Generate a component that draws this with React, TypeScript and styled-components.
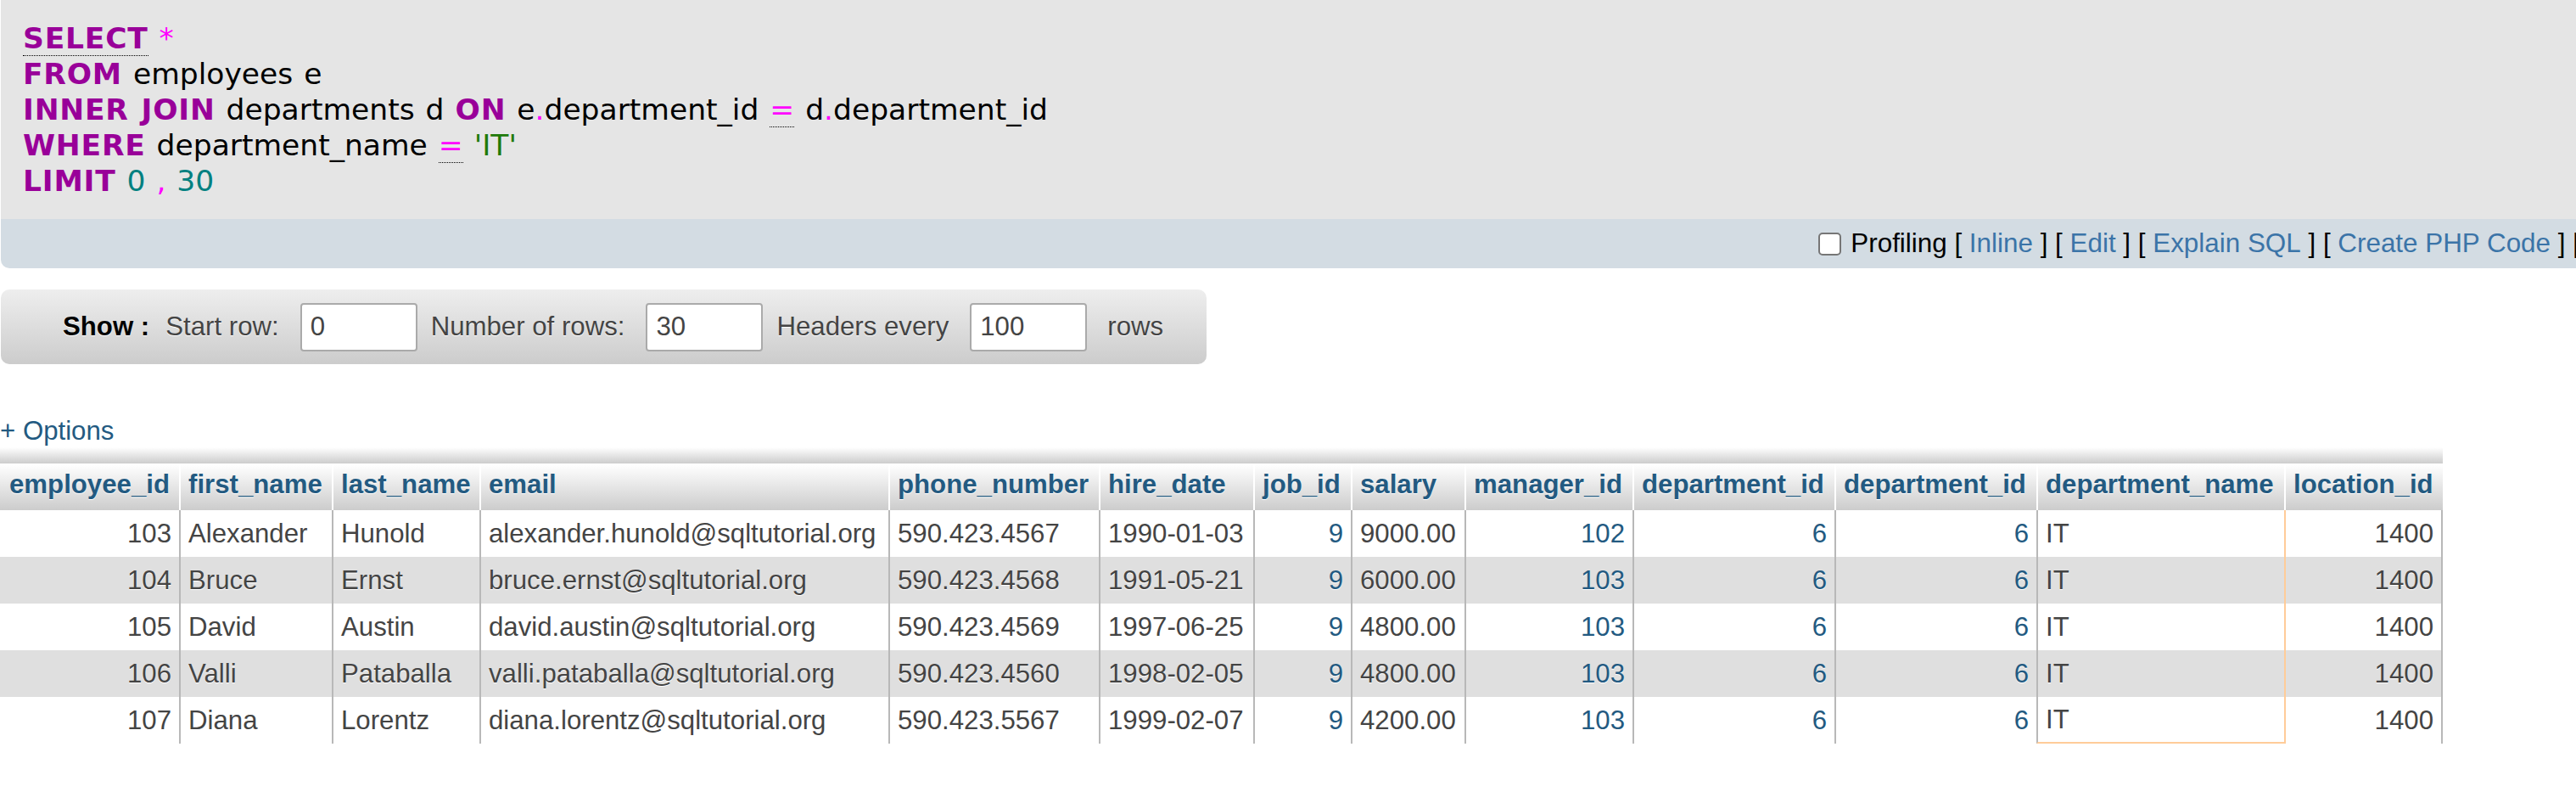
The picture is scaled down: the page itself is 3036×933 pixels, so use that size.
import React from "react";
import styled, { createGlobalStyle, css } from "styled-components";

const GlobalStyle = createGlobalStyle`
  html, body { margin: 0; padding: 0; background: #fff; overflow: hidden; }
  body {
    font-family: "Liberation Sans", Arial, sans-serif;
    font-size: 31.2px;
    color: #444;
  }
  * { box-sizing: border-box; }
`;

const Page = styled.div`
  width: 3036px;
  overflow: hidden;
`;

/* ---------- SQL query panel ---------- */

const SqlPanel = styled.div`
  margin-left: 1px;
  width: 3186px;
  border-bottom-left-radius: 10px;
  overflow: hidden;
  background: #d3dce3;
`;

const Code = styled.div`
  background: #e5e5e5;
  padding: 24px 0 24px 26px;
  font-family: "DejaVu Sans", Verdana, sans-serif;
  font-size: 34.5px;
  line-height: 42px;
  word-spacing: 2px;
  color: #000;
  white-space: pre;
`;

const CodeLine = styled.div``;

const Kw = styled.span<{ $doc?: boolean }>`
  color: #990099;
  font-weight: bold;
  letter-spacing: 0.8px;
  ${(p) =>
    p.$doc &&
    css`
      border-bottom: 1px dotted #000;
    `}
`;

const Punct = styled.span<{ $doc?: boolean }>`
  color: #ff00ff;
  ${(p) =>
    p.$doc &&
    css`
      border-bottom: 1px dotted #000;
    `}
`;

const Num = styled.span`
  color: #008080;
`;

const Str = styled.span`
  color: #1f7a0a;
`;

const Toolbar = styled.div`
  height: 58px;
  display: flex;
  align-items: center;
  justify-content: flex-end;
  padding-right: 10px;
  font-size: 31.4px;
  color: #000;
  white-space: pre;
`;

const Check = styled.input`
  appearance: none;
  -webkit-appearance: none;
  width: 27px;
  height: 27px;
  margin: 0 11px 0 0;
  border: 2px solid #767676;
  border-radius: 5px;
  background: #fff;
`;

const ToolLink = styled.a`
  color: #3b74a8;
  text-decoration: none;
`;

/* ---------- Show bar ---------- */

const ShowBar = styled.form`
  margin: 25px 0 0 1px;
  width: 1421px;
  height: 88px;
  border-radius: 10px;
  background: linear-gradient(#eeeeee, #cccccc);
  display: flex;
  align-items: center;
  padding-left: 73px;
  color: #444;
  text-shadow: 0 1px 0 #fff;
  white-space: nowrap;
`;

const ShowTitle = styled.span`
  font-weight: bold;
  color: #000;
  margin-right: 19px;
`;

const FieldLabel = styled.label`
  margin-right: 25px;
`;

const NumberInput = styled.input`
  width: 138px;
  height: 57px;
  margin: 0 16px 0 0;
  padding: 0 10px;
  border: 2px solid #aaa;
  border-radius: 4px;
  background: #fff;
  font-family: "Liberation Sans", Arial, sans-serif;
  font-size: 31.2px;
  color: #444;
  outline: none;
`;

const Suffix = styled.span`
  margin-left: 8px;
`;

/* ---------- Options link ---------- */

const Options = styled.div`
  margin-top: 61px;
  line-height: 35px;
  color: #235a81;
`;

/* ---------- Results table ---------- */

const Table = styled.table`
  margin-top: 2px;
  border-collapse: separate;
  border-spacing: 0;
  table-layout: fixed;
  width: 2879px;
`;

const Col = styled.col<{ $w: number }>`
  width: ${(p) => p.$w}px;
`;

const BarCell = styled.td`
  height: 20px;
  padding: 0;
  background: linear-gradient(#ffffff, #cccccc);
  border-bottom: 1px solid #fff;
`;

const Th = styled.th<{ $first?: boolean }>`
  height: 54px;
  padding: 0 9px 6px;
  text-align: left;
  vertical-align: middle;
  font-weight: bold;
  color: #235a81;
  text-shadow: 0 1px 0 #fff;
  white-space: nowrap;
  overflow: hidden;
  background: linear-gradient(#ffffff, #cccccc);
  border-left: ${(p) => (p.$first ? "none" : "2px solid #fff")};
  ${(p) =>
    p.$first &&
    css`
      padding-left: 11px;
    `}
`;

const Tr = styled.tr<{ $odd: boolean }>`
  background: ${(p) => (p.$odd ? "#dfdfdf" : "#ffffff")};
`;

const Td = styled.td<{
  $right?: boolean;
  $link?: boolean;
  $first?: boolean;
  $afterMark?: boolean;
  $lastCol?: boolean;
  $markBottom?: boolean;
}>`
  height: 55px;
  padding: 0 9px;
  vertical-align: middle;
  white-space: nowrap;
  overflow: hidden;
  text-align: ${(p) => (p.$right ? "right" : "left")};
  color: ${(p) => (p.$link ? "#235a81" : "#444")};
  text-shadow: 0 1px 0 #fff;
  border-left: ${(p) =>
    p.$first ? "none" : p.$afterMark ? "2px solid #fc9" : "2px solid #b8b8b8"};
  ${(p) =>
    p.$first &&
    css`
      padding-left: 11px;
    `}
  ${(p) =>
    p.$lastCol &&
    css`
      border-right: 2px solid #b8b8b8;
    `}
  ${(p) =>
    p.$markBottom &&
    css`
      border-bottom: 2px solid #fc9;
    `}
`;

type Column = { name: string; w: number; right?: boolean; link?: boolean; mark?: boolean };

const columns: Column[] = [
  { name: "employee_id", w: 211, right: true },
  { name: "first_name", w: 180 },
  { name: "last_name", w: 174 },
  { name: "email", w: 482 },
  { name: "phone_number", w: 248 },
  { name: "hire_date", w: 182 },
  { name: "job_id", w: 115, right: true, link: true },
  { name: "salary", w: 134 },
  { name: "manager_id", w: 198, right: true, link: true },
  { name: "department_id", w: 238, right: true, link: true },
  { name: "department_id", w: 238, right: true, link: true },
  { name: "department_name", w: 292, mark: true },
  { name: "location_id", w: 187, right: true },
];

const rows: (string | number)[][] = [
  [103, "Alexander", "Hunold", "alexander.hunold@sqltutorial.org", "590.423.4567", "1990-01-03", 9, "9000.00", 102, 6, 6, "IT", 1400],
  [104, "Bruce", "Ernst", "bruce.ernst@sqltutorial.org", "590.423.4568", "1991-05-21", 9, "6000.00", 103, 6, 6, "IT", 1400],
  [105, "David", "Austin", "david.austin@sqltutorial.org", "590.423.4569", "1997-06-25", 9, "4800.00", 103, 6, 6, "IT", 1400],
  [106, "Valli", "Pataballa", "valli.pataballa@sqltutorial.org", "590.423.4560", "1998-02-05", 9, "4800.00", 103, 6, 6, "IT", 1400],
  [107, "Diana", "Lorentz", "diana.lorentz@sqltutorial.org", "590.423.5567", "1999-02-07", 9, "4200.00", 103, 6, 6, "IT", 1400],
];

export default function App() {
  return (
    <Page>
      <GlobalStyle />
      <SqlPanel>
        <Code>
          <CodeLine>
            <Kw $doc>SELECT</Kw> <Punct>*</Punct>
          </CodeLine>
          <CodeLine>
            <Kw>FROM</Kw> employees e
          </CodeLine>
          <CodeLine>
            <Kw>INNER JOIN</Kw> departments d <Kw>ON</Kw> e<Punct>.</Punct>department_id{" "}
            <Punct $doc>=</Punct> d<Punct>.</Punct>department_id
          </CodeLine>
          <CodeLine>
            <Kw>WHERE</Kw> department_name <Punct $doc>=</Punct> <Str>'IT'</Str>
          </CodeLine>
          <CodeLine>
            <Kw>LIMIT</Kw> <Num>0</Num> <Punct>,</Punct> <Num>30</Num>
          </CodeLine>
        </Code>
        <Toolbar>
          <Check type="checkbox" />
          <span>Profiling [ </span>
          <ToolLink>Inline</ToolLink>
          <span> ] [ </span>
          <ToolLink>Edit</ToolLink>
          <span> ] [ </span>
          <ToolLink>Explain SQL</ToolLink>
          <span> ] [ </span>
          <ToolLink>Create PHP Code</ToolLink>
          <span> ] [ </span>
          <ToolLink>Refresh</ToolLink>
          <span> ]</span>
        </Toolbar>
      </SqlPanel>

      <ShowBar onSubmit={(e) => e.preventDefault()}>
        <ShowTitle>Show :</ShowTitle>
        <FieldLabel>Start row:</FieldLabel>
        <NumberInput defaultValue="0" />
        <FieldLabel>Number of rows:</FieldLabel>
        <NumberInput defaultValue="30" />
        <FieldLabel>Headers every</FieldLabel>
        <NumberInput defaultValue="100" />
        <Suffix>rows</Suffix>
      </ShowBar>

      <Options>+ Options</Options>

      <Table>
        <colgroup>
          {columns.map((c, i) => (
            <Col key={i} $w={c.w} />
          ))}
        </colgroup>
        <thead>
          <tr>
            <BarCell colSpan={columns.length} />
          </tr>
          <tr>
            {columns.map((c, i) => (
              <Th key={i} $first={i === 0}>
                {c.name}
              </Th>
            ))}
          </tr>
        </thead>
        <tbody>
          {rows.map((r, ri) => (
            <Tr key={ri} $odd={ri % 2 === 1}>
              {r.map((v, ci) => {
                const col = columns[ci];
                return (
                  <Td
                    key={ci}
                    $right={col.right}
                    $link={col.link}
                    $first={ci === 0}
                    $afterMark={ci > 0 && !!columns[ci - 1].mark}
                    $lastCol={ci === columns.length - 1}
                    $markBottom={!!col.mark && ri === rows.length - 1}
                  >
                    {v}
                  </Td>
                );
              })}
            </Tr>
          ))}
        </tbody>
      </Table>
    </Page>
  );
}
